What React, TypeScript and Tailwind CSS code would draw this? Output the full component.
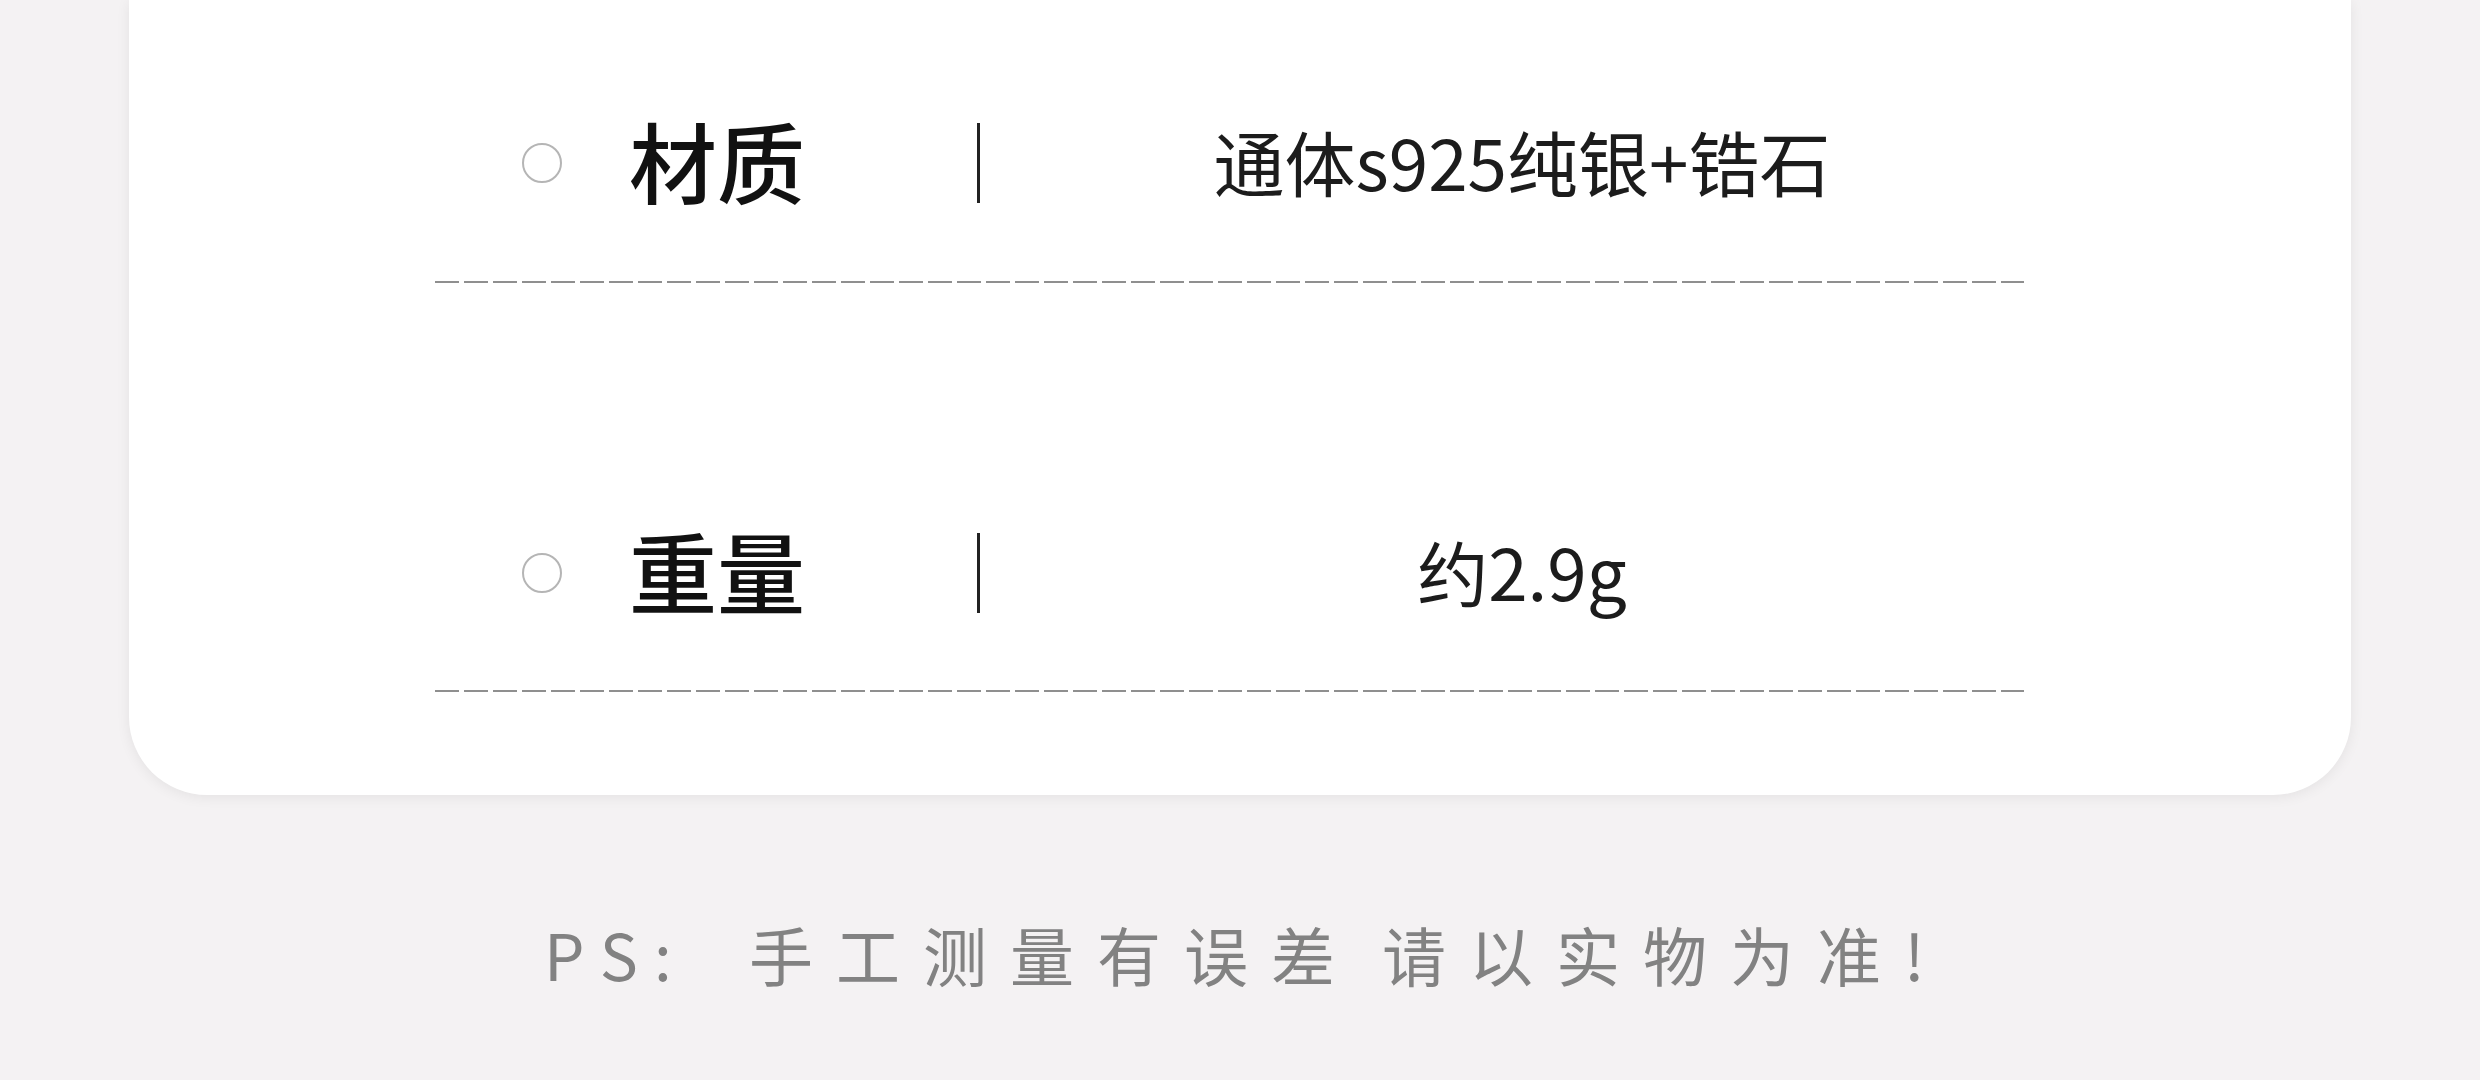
import React from "react";

const specs = [
  { label: "材质", value: "通体s925纯银+锆石" },
  { label: "重量", value: "约2.9g" },
];

function Dashes() {
  return (
    <div className="h-[2px] w-full bg-[linear-gradient(to_right,#8f8f8f_24px,transparent_24px)] bg-[length:29px_2px] bg-repeat-x" />
  );
}

function SpecRow({ label, value, first }: { label: string; value: string; first: boolean }) {
  return (
    <div className={first ? "pt-[113px]" : "pt-[240px]"}>
      <div className="flex h-[100px] items-center">
        <span className="ml-[87px] h-[40px] w-[40px] shrink-0 rounded-full border-2 border-[#b5b5b5]" />
        <span className="ml-[67px] w-[348px] shrink-0 pb-[8px] text-[88px] font-medium leading-none text-[#111]">
          {label}
        </span>
        <span className="h-[80px] w-[3px] shrink-0 bg-[#222]" />
        <div className="flex flex-1 justify-center pb-[6px] pl-[40px]">
          <span className="text-[71px] leading-none text-[#1c1c1c]">{value}</span>
        </div>
      </div>
      <div className={first ? "mt-[68px]" : "mt-[67px]"}>
        <Dashes />
      </div>
    </div>
  );
}

export default function App() {
  return (
    <div className="h-[1080px] w-full overflow-hidden bg-[#f4f2f3] font-['Noto_Sans_CJK_SC','Noto_Sans',sans-serif]">
      <div className="mx-[129px] rounded-b-[78px] bg-white pb-[103px] shadow-[0_2px_14px_rgba(0,0,0,0.07)]">
        <div className="ml-[306px] w-[1589px]">
          {specs.map((s, i) => (
            <SpecRow key={s.label} label={s.label} value={s.value} first={i === 0} />
          ))}
        </div>
      </div>

      <div className="mt-[126px] flex items-center pl-[544px] text-[64px] leading-none text-[#828282]">
        <span className="w-[205px] shrink-0 tracking-[16px]">PS:</span>
        <span className="shrink-0 tracking-[23px]">手工测量有误差</span>
        <span className="ml-[24px] shrink-0 tracking-[23px]">请以实物为准!</span>
      </div>
    </div>
  );
}
